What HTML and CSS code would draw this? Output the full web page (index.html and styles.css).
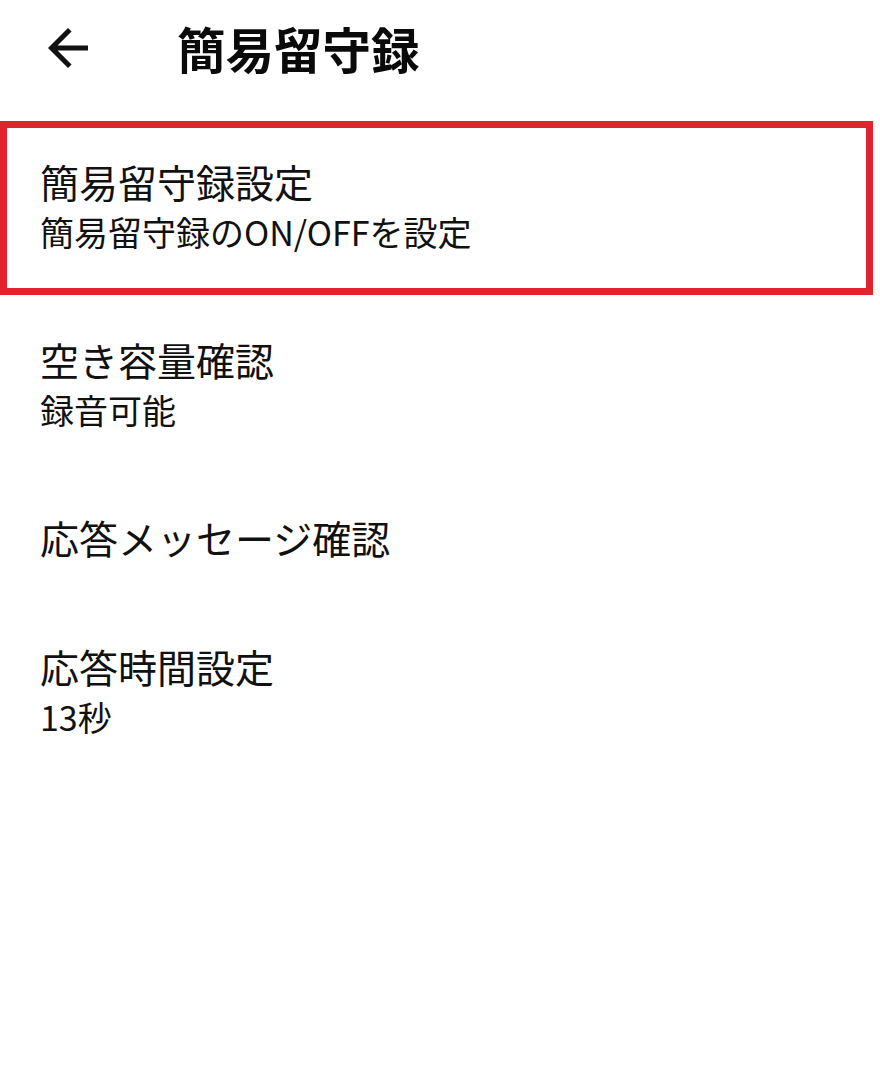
FILE: index.html
```html
<!DOCTYPE html>
<html lang="ja">
<head>
<meta charset="utf-8">
<link rel="stylesheet" href="styles.css">
</head>
<body>
<header class="appbar">
  <svg class="back" viewBox="0 0 24 24" width="60" height="60"><path d="M20 11H7.83l5.59-5.59L12 4l-8 8 8 8 1.41-1.41L7.83 13H20v-2z"/></svg>
  <h1 class="title">簡易留守録</h1>
</header>
<ul class="list">
  <li class="item highlight">
    <div class="item-title">簡易留守録設定</div>
    <div class="item-sub">簡易留守録のON/OFFを設定</div>
  </li>
  <li class="item">
    <div class="item-title">空き容量確認</div>
    <div class="item-sub">録音可能</div>
  </li>
  <li class="item">
    <div class="item-title">応答メッセージ確認</div>
  </li>
  <li class="item">
    <div class="item-title">応答時間設定</div>
    <div class="item-sub">13秒</div>
  </li>
</ul>
</body>
</html>
```
FILE: styles.css
```css
html, body {
  margin: 0;
  padding: 0;
  background: #ffffff;
}
body {
  width: 880px;
  height: 1078px;
  font-family: "Noto Sans CJK JP", "Noto Sans", sans-serif;
  color: #111111;
  overflow: hidden;
}
.appbar {
  display: flex;
  align-items: center;
  height: 118px;
  padding-left: 38px;
  box-sizing: border-box;
  padding-bottom: 22px;
}
.back {
  display: block;
  fill: #111111;
}
.title {
  margin: 0 0 0 79px;
  font-size: 48.5px;
  font-weight: 700;
  line-height: 60px;
  color: #0a0a0a;
}
.list {
  list-style: none;
  margin: 0;
  padding: 0;
}
.item {
  padding: 39px 0 39px 40px;
}
.item.highlight {
  margin-top: 3px;
  width: 873px;
  box-sizing: border-box;
  border: 7px solid #e0232d;
  padding: 28px 0 32px 33px;
}
.item-title {
  font-size: 39px;
  line-height: 51px;
  font-weight: 400;
}
.item-sub {
  font-size: 34px;
  line-height: 49px;
  font-weight: 400;
}
```
